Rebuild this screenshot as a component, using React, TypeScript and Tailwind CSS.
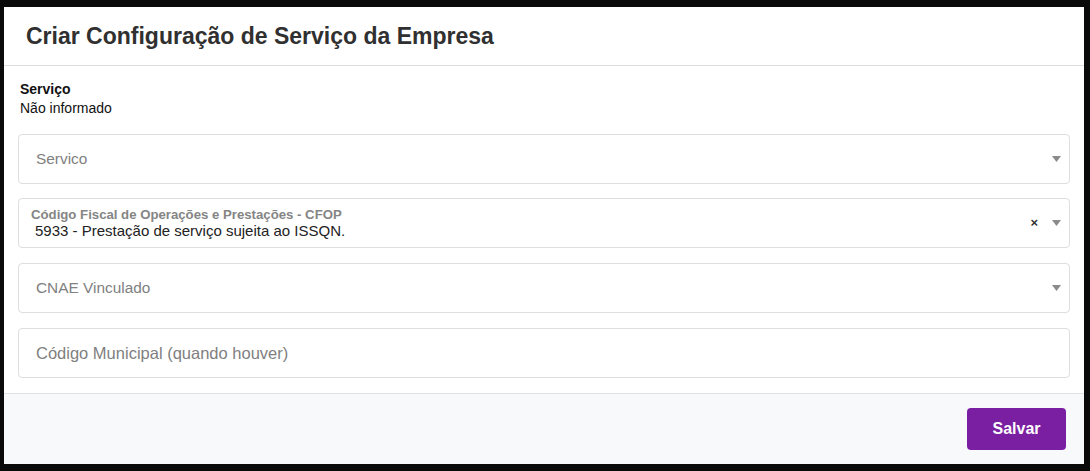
const font = { fontFamily: '"Liberation Sans", Arial, sans-serif' };

function Caret() {
  return (
    <svg width="9" height="6" viewBox="0 0 9 6" className="shrink-0">
      <path d="M0 0h9L4.5 6z" fill="#8a8a8a" />
    </svg>
  );
}

function SelectBox({ placeholder, className = "" }: { placeholder: string; className?: string }) {
  return (
    <div className={`flex h-[50px] items-center rounded-[4px] border border-[#dedede] bg-white pl-[17px] pr-[8px] ${className}`}>
      <span className="flex-1 text-[15.4px] text-[#808080]">{placeholder}</span>
      <Caret />
    </div>
  );
}

export default function App() {
  return (
    <div className="h-[471px] w-[1090px] bg-[#0a0a0a] pt-[7px] pl-[4px]" style={font}>
      <div className="flex w-[1080px] flex-col bg-white">
        <div className="flex h-[59px] items-center border-b border-[#dcdcdc] pl-[22px]">
          <h1 className="text-[23px] font-bold text-[#303030]">Criar Configuração de Serviço da Empresa</h1>
        </div>

        <div className="flex flex-col px-[14px] pt-[14px] pb-[15px]">
          <div className="pl-[2px] text-[14px] leading-[19px] text-[#111]">
            <div className="font-bold">Serviço</div>
            <div>Não informado</div>
          </div>

          <div className="mt-[16px] flex flex-col">
            <SelectBox placeholder="Servico" />

            <div className="mt-[14px] flex h-[50px] items-center rounded-[4px] border border-[#dedede] bg-white pl-[12px] pr-[8px]">
              <div className="flex flex-1 flex-col pt-[1px]">
                <span className="text-[13.2px] font-bold leading-[15px] text-[#858585]">
                  Código Fiscal de Operações e Prestações - CFOP
                </span>
                <span className="pl-[4px] text-[15px] leading-[18px] text-[#222]">
                  5933 - Prestação de serviço sujeita ao ISSQN.
                </span>
              </div>
              <span className="mr-[14px] text-[13px] font-bold text-[#333]">×</span>
              <Caret />
            </div>

            <SelectBox placeholder="CNAE Vinculado" className="mt-[15px]" />

            <div className="mt-[15px] flex h-[50px] items-center rounded-[4px] border border-[#dedede] bg-white pl-[17px]">
              <span className="text-[16.5px] text-[#808080]">Código Municipal (quando houver)</span>
            </div>
          </div>
        </div>

        <div className="flex h-[71px] items-center justify-end border-t border-[#e2e2e2] bg-[#f8f9fa] pr-[18px]">
          <button className="h-[42px] w-[99px] rounded-[4px] bg-[#7b1fa2] text-[16px] font-bold text-white">
            Salvar
          </button>
        </div>
      </div>
    </div>
  );
}
